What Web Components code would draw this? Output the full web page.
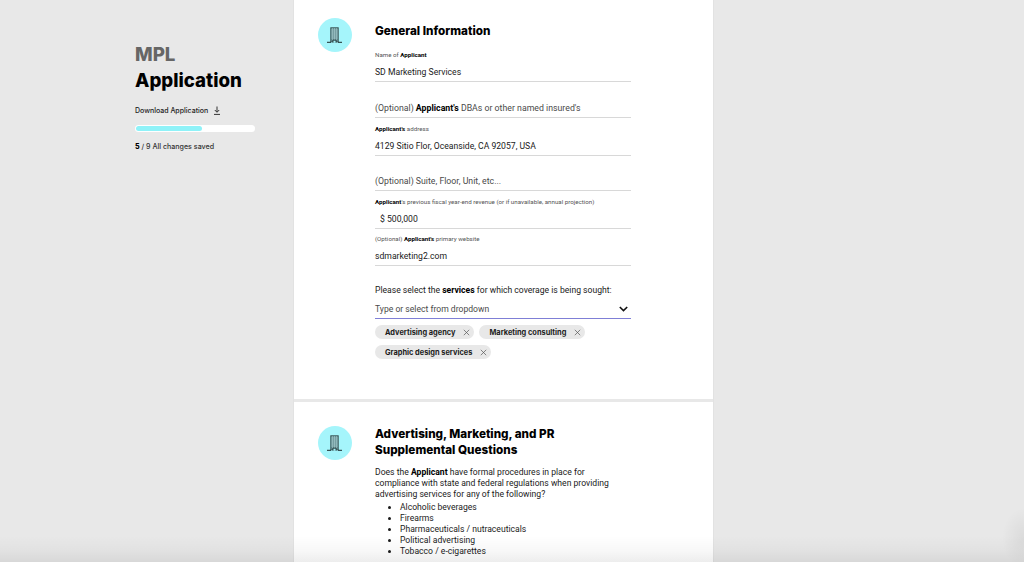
<!DOCTYPE html>
<html>
<head>
<meta charset="utf-8">
<style>
  html, body { margin: 0; height: 562px; overflow: hidden; background: #e8e8e8; }
  body { font-family: Roboto, "Liberation Sans", sans-serif; color: #111; }
  b { font-weight: 700; color: #000; }
</style>
</head>
<body>
<app-page>
  <app-sidebar slot="side"></app-sidebar>
  <form-section>
    <span slot="title">General Information</span>
    <form-field h="34" style="margin-top:9px"><span slot="label">Name of <b>Applicant</b></span>SD Marketing Services</form-field>
    <form-field h="36" muted>(Optional) <b>Applicant's</b> DBAs or other named insured's</form-field>
    <form-field h="38"><span slot="label"><b>Applicant's</b> address</span>4129 Sitio Flor, Oceanside, CA 92057, USA</form-field>
    <form-field h="35" muted>(Optional) Suite, Floor, Unit, etc...</form-field>
    <form-field h="38" indent><span slot="label"><b>Applicant</b>'s previous fiscal year-end revenue (or if unavailable, annual projection)</span>$ 500,000</form-field>
    <form-field h="37"><span slot="label">(Optional) <b>Applicant's</b> primary website</span>sdmarketing2.com</form-field>
    <service-select>
      <span slot="question">Please select the <b>services</b> for which coverage is being sought:</span>
      <service-chip>Advertising agency</service-chip>
      <service-chip>Marketing consulting</service-chip>
      <service-chip>Graphic design services</service-chip>
    </service-select>
  </form-section>
  <form-section second>
    <span slot="title">Advertising, Marketing, and PR<br>Supplemental Questions</span>
    <question-text>
      <span slot="intro">Does the <b>Applicant</b> have formal procedures in place for<br>compliance with state and federal regulations when providing<br>advertising services for any of the following?</span>
      <li>Alcoholic beverages</li>
      <li>Firearms</li>
      <li>Pharmaceuticals / nutraceuticals</li>
      <li>Political advertising</li>
      <li>Tobacco / e-cigarettes</li>
    </question-text>
  </form-section>
</app-page>

<script>
class AppPage extends HTMLElement {
  connectedCallback() {
    if (this.shadowRoot) return;
    this.attachShadow({ mode: 'open' }).innerHTML = `
      <style>
        :host { display: flex; height: 562px; position: relative; overflow: hidden; }
        .side { width: 294px; flex: none; }
        main { width: 419px; flex: none; background: #fff; height: 562px; overflow: hidden; box-shadow: 1px 0 0 #e2e2e2, -1px 0 0 #e2e2e2; }
        .fade { position: absolute; left: 0; right: 0; bottom: 0; height: 26px; pointer-events: none;
                background: linear-gradient(rgba(0,0,0,0), rgba(0,0,0,.03) 60%, rgba(0,0,0,.07)); }
        .corner { position: absolute; right: -22px; bottom: -6px; width: 44px; height: 60px; pointer-events: none;
                  background: radial-gradient(closest-side, rgba(0,0,0,.06), rgba(0,0,0,0)); }
      </style>
      <div class="side"><slot name="side"></slot></div>
      <main><slot></slot></main>
      <div class="fade"></div>
      <div class="corner"></div>`;
  }
}

class AppSidebar extends HTMLElement {
  connectedCallback() {
    if (this.shadowRoot) return;
    this.attachShadow({ mode: 'open' }).innerHTML = `
      <style>
        :host { display: block; padding: 42px 39px 0 135px; font-family: Inter, "Liberation Sans", sans-serif; }
        h1 { margin: 0; font-size: 18.7px; line-height: 26px; font-weight: 800; color: #000; }
        h1 span { display: block; color: #666; }
        .dl { display: flex; align-items: center; gap: 5px; margin-top: 10px; height: 12px; font-size: 7px; font-weight: 500; color: #222; }
        .bar { height: 7px; margin-top: 9px; background: #fff; border-radius: 4px; padding: 1px; box-sizing: border-box; }
        .bar i { display: block; height: 5px; width: 56%; background: #8ff2f8; border-radius: 3px; }
        .count { margin-top: 10px; font-size: 7.1px; font-weight: 500; color: #333; }
        .count b { font-weight: 800; color: #000; }
      </style>
      <h1><span>MPL</span>Application</h1>
      <div class="dl">Download Application
        <svg width="8" height="9" viewBox="0 0 8 9" fill="none" stroke="#333" stroke-width="1"><path d="M4 0.5V6M1.8 4L4 6.3 6.2 4M1 8.4H7"/></svg>
      </div>
      <div class="bar"><i></i></div>
      <div class="count"><b>5</b> / 9 All changes saved</div>`;
  }
}

const buildingIcon = `
  <svg width="34" height="34" viewBox="0 0 34 34">
    <circle cx="17" cy="17" r="17" fill="#a5f5fb"/>
    <path d="M12.6 9.6h7.8V24h-7.8z" fill="#5e878b" stroke="#2b4143" stroke-width=".6"/>
    <path d="M14.6 10v12M16.5 10v12M18.4 10v12M13 12h7M13 14h7M13 16h7M13 18h7M13 20h7" stroke="#b5dadc" stroke-width=".5" fill="none"/>
    <path d="M9 24.3h4M20 24.3h4" stroke="#1c2b2c" stroke-width="1" fill="none"/>
    <path d="M15 24.6v-2.4h3v2.4" fill="#a5f5fb" stroke="#1c2b2c" stroke-width=".8"/>
  </svg>`;

class FormSection extends HTMLElement {
  connectedCallback() {
    if (this.shadowRoot) return;
    this.attachShadow({ mode: 'open' }).innerHTML = `
      <style>
        :host { display: grid; grid-template-columns: 34px 256px; column-gap: 23px; padding: 18px 0 0 24px; height: 381px; }
        :host([second]) { border-top: 3px solid #e8e8e8; padding-top: 24px; height: auto; }
        .ic { height: 34px; }
        h2 { margin: 5px 0 0; font-family: Inter, "Liberation Sans", sans-serif; font-size: 11.7px; line-height: 16px; font-weight: 800; color: #000; }
        :host([second]) h2 { margin-top: 0; }
      </style>
      <div class="ic">${buildingIcon}</div>
      <div><h2><slot name="title"></slot></h2><slot></slot></div>`;
  }
}

class FormField extends HTMLElement {
  connectedCallback() {
    if (this.shadowRoot) return;
    this.attachShadow({ mode: 'open' }).innerHTML = `
      <style>
        :host { display: flex; flex-direction: column; justify-content: flex-end; box-sizing: border-box; height: var(--h); border-bottom: 1px solid #d8d8d8; }
        .label { font-size: 6.2px; line-height: 8px; color: #555; margin-bottom: 7px; }
        .value { font-size: 8.65px; line-height: 12px; padding-bottom: 3px; color: #1a1a1a; }
        :host([muted]) .value { font-size: 8.75px; color: #4a4a4a; }
        :host([indent]) .value { padding-left: 5px; }
      </style>
      <div class="label"><slot name="label"></slot></div>
      <div class="value"><slot></slot></div>`;
    this.style.setProperty('--h', this.getAttribute('h') + 'px');
  }
}

class ServiceSelect extends HTMLElement {
  connectedCallback() {
    if (this.shadowRoot) return;
    this.attachShadow({ mode: 'open' }).innerHTML = `
      <style>
        :host { display: block; margin-top: 18px; }
        .q { font-size: 8.6px; line-height: 12px; color: #1a1a1a; }
        .box { display: flex; justify-content: space-between; align-items: center; height: 19px; margin-top: 4px; box-sizing: border-box;
               border-bottom: 1px solid #7f7fd6; font-size: 8.6px; color: #4a4a4a; padding-right: 3px; }
        .chips { display: flex; flex-wrap: wrap; gap: 6px 5px; margin-top: 6px; width: 240px; }
      </style>
      <div class="q"><slot name="question"></slot></div>
      <div class="box">Type or select from dropdown
        <svg width="9" height="6" viewBox="0 0 9 6" fill="none" stroke="#111" stroke-width="1.6"><path d="M.8 1l3.7 3.6L8.2 1"/></svg>
      </div>
      <div class="chips"><slot></slot></div>`;
  }
}

class ServiceChip extends HTMLElement {
  connectedCallback() {
    if (this.shadowRoot) return;
    this.attachShadow({ mode: 'open' }).innerHTML = `
      <style>
        :host { display: inline-flex; align-items: center; gap: 8px; height: 14px; padding: 0 4px 0 10px; border-radius: 7px; background: #e8e8e8;
                font-family: Inter, "Liberation Sans", sans-serif; font-size: 7.4px; font-weight: 700; color: #1c1c1c; white-space: nowrap; }
      </style>
      <slot></slot>
      <svg width="7" height="7" viewBox="0 0 7 7" stroke="#555" stroke-width=".7"><path d="M.8.8l5.4 5.4M6.2.8L.8 6.2"/></svg>`;
  }
}

class QuestionText extends HTMLElement {
  connectedCallback() {
    if (this.shadowRoot) return;
    this.attachShadow({ mode: 'open' }).innerHTML = `
      <style>
        :host { display: block; margin-top: 9px; font-size: 8.6px; line-height: 11px; color: #1a1a1a; }
        ul { margin: 2px 0 0; padding: 0 0 0 25px; }
        ::slotted(li) { line-height: 11px; }
      </style>
      <div><slot name="intro"></slot></div>
      <ul><slot></slot></ul>`;
  }
}

customElements.define('app-page', AppPage);
customElements.define('app-sidebar', AppSidebar);
customElements.define('form-section', FormSection);
customElements.define('form-field', FormField);
customElements.define('service-select', ServiceSelect);
customElements.define('service-chip', ServiceChip);
customElements.define('question-text', QuestionText);
</script>
</body>
</html>
